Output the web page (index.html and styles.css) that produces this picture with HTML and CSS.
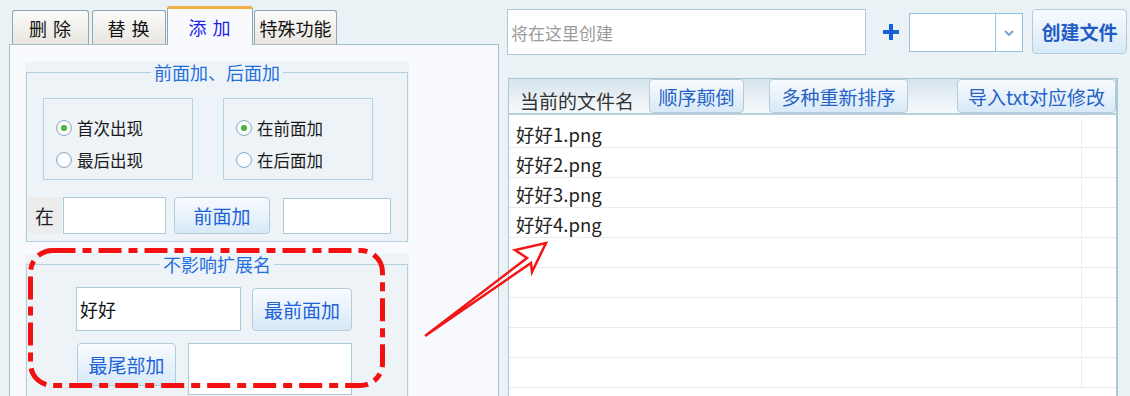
FILE: index.html
```html
<!DOCTYPE html>
<html lang="zh-CN">
<head>
<meta charset="utf-8">
<title>添加</title>
<link rel="stylesheet" href="styles.css">
</head>
<body>
<div class="app">
  <div class="left">
    <div class="tabs">
      <div class="tab t1">删 除</div>
      <div class="tab t2">替 换</div>
      <div class="tab t3">添 加</div>
      <div class="tab t4">特殊功能</div>
    </div>
    <div class="panel">
      <div class="group g1">
        <div class="frame">
          <div class="legend"><span>前面加、后面加</span></div>
          <div class="radios">
            <div class="rbox">
              <div class="radio on"><i></i>首次出现</div>
              <div class="radio"><i></i>最后出现</div>
            </div>
            <div class="rbox">
              <div class="radio on"><i></i>在前面加</div>
              <div class="radio"><i></i>在后面加</div>
            </div>
          </div>
          <div class="row1">
            <span class="lbl">在</span>
            <div class="input in-a"></div>
            <div class="btn btn-a">前面加</div>
            <div class="input in-b"></div>
          </div>
        </div>
      </div>
      <div class="group g2">
        <div class="frame">
          <div class="legend"><span>不影响扩展名</span></div>
          <div class="row2a">
            <div class="input in-c">好好</div>
            <div class="btn btn-c">最前面加</div>
          </div>
          <div class="row2b">
            <div class="btn btn-d">最尾部加</div>
            <div class="input in-d"></div>
          </div>
        </div>
      </div>
    </div>
  </div>
  <div class="right">
    <div class="top">
      <div class="name">将在这里创建</div>
      <svg class="plus" width="18" height="18" viewBox="0 0 18 18"><path d="M9 1V17M1 9H17" stroke="#1763d6" stroke-width="4"/></svg>
      <div class="combo"><div class="dd"><svg width="10" height="6" viewBox="0 0 10 6"><path d="M1 1L5 5L9 1" fill="none" stroke="#79a6cf" stroke-width="2"/></svg></div></div>
      <div class="btn create">创建文件</div>
    </div>
    <div class="list">
      <div class="lh">
        <div class="lh-label">当前的文件名</div>
        <div class="btn hb hb1">顺序颠倒</div>
        <div class="btn hb hb2">多种重新排序</div>
        <div class="btn hb hb3">导入txt对应修改</div>
      </div>
      <div class="rows">
        <div class="row"><div class="c1">好好1.png</div><div class="c2"></div></div>
        <div class="row"><div class="c1">好好2.png</div><div class="c2"></div></div>
        <div class="row"><div class="c1">好好3.png</div><div class="c2"></div></div>
        <div class="row"><div class="c1">好好4.png</div><div class="c2"></div></div>
        <div class="row"><div class="c1"></div><div class="c2"></div></div>
        <div class="row"><div class="c1"></div><div class="c2"></div></div>
        <div class="row"><div class="c1"></div><div class="c2"></div></div>
        <div class="row"><div class="c1"></div><div class="c2"></div></div>
        <div class="row"><div class="c1"></div><div class="c2"></div></div>
      </div>
    </div>
  </div>
</div>
<svg class="annot" width="1130" height="396" viewBox="0 0 1130 396">
  <rect x="30.5" y="250.5" width="352" height="135" rx="22" ry="22" fill="none" stroke="#f21010" stroke-width="5" stroke-dasharray="23 7 9 7"/>
  <polygon points="425,336 527,258 515,250 546,243 532,272 531,263" fill="none" stroke="#f41414" stroke-width="2.5" stroke-linejoin="miter"/>
</svg>
</body>
</html>
```
FILE: styles.css
```css
* { box-sizing: border-box; }
html, body { margin: 0; padding: 0; }
body {
  width: 1130px;
  height: 396px;
  overflow: hidden;
  position: relative;
  background: #eaf2f6;
  font-family: "Noto Sans CJK SC", "Noto Sans", sans-serif;
  color: #222;
}
.app { display: flex; height: 396px; padding-left: 9px; overflow: hidden; }
.left { width: 490px; height: 396px; flex: none; display: flex; flex-direction: column; }

/* tabs */
.tabs { height: 44px; display: flex; align-items: flex-end; padding-left: 3px; flex: none; }
.tab {
  height: 34px;
  border: 1px solid #8fa6b4;
  border-bottom: none;
  border-radius: 3px 3px 0 0;
  background: linear-gradient(#fbfbf9, #e8e6df);
  display: flex; align-items: center; justify-content: center;
  font-size: 18px; color: #111; flex: none; letter-spacing: 1px;
}
.t1 { width: 77px; }
.t2 { width: 74px; margin-left: 3px; }
.t3 {
  width: 86px; margin-left: 1px; height: 39px; margin-bottom: -1px;
  background: #f8fafd; border-top: 3px solid #f3b042; color: #2222e6;
  position: relative; z-index: 1; padding-bottom: 1px;
}
.t4 { width: 83px; margin-left: 1px; letter-spacing: 0; }

/* panel */
.panel {
  width: 490px; flex: 1; min-height: 0; overflow: hidden;
  border: 1px solid #a8bccb; border-bottom: none;
  background: #f8fafd;
  padding: 17px 0 0 15px;
}
.group { width: 384px; background: #edf3f7; padding: 10px 0 0 1px; }
.g1 { height: 180px; }
.g2 { height: 200px; margin-top: 12px; }
.frame { width: 382px; height: 100%; border: 1px solid #b0d0de; }
.legend { height: 20px; margin-top: -11px; display: flex; justify-content: center; line-height: 20px; }
.legend span { background: #edf3f7; padding: 0 3px; color: #1f6fdf; font-size: 18px; }

.radios { display: flex; gap: 30px; margin: 16px 0 0 16px; }
.rbox { width: 150px; height: 82px; border: 1px solid #b3d4e2; padding: 13px 0 0 12px; }
.radio { height: 32px; display: flex; align-items: center; gap: 5px; font-size: 16.5px; color: #1a1a1a; }
.radio i {
  width: 16px; height: 16px; border-radius: 50%; flex: none;
  border: 1px solid #8eabc4;
  background: radial-gradient(circle, #ffffff 40%, #e6edf3);
  display: flex; align-items: center; justify-content: center;
}
.radio.on i::after {
  content: ""; width: 6px; height: 6px; border-radius: 50%;
  background: radial-gradient(circle, #5ec24a, #2f9a22);
}

.row1 { display: flex; margin-top: 17px; height: 37px; }
.lbl { width: 35px; height: 36px; background: #ececec; font-size: 19px; display: flex; align-items: center; justify-content: center; }
.input { background: #fff; border: 1px solid #a9cbd8; }
.in-a { width: 103px; height: 37px; margin-left: 1px; }
.btn {
  border: 1px solid #b5cbd8; border-radius: 4px;
  background: linear-gradient(#f8fbfe, #d8e9f7);
  color: #1d62d8; font-size: 19px;
  display: flex; align-items: center; justify-content: center; flex: none;
}
.btn-a { width: 96px; height: 37px; margin-left: 8px; }
.in-b { width: 108px; height: 36px; margin: 1px 0 0 13px; }

.row2a { display: flex; margin: 13px 0 0 49px; align-items: flex-start; }
.in-c { width: 165px; height: 44px; font-size: 18px; padding-left: 3px; display: flex; align-items: center; color: #111; }
.btn-c { width: 100px; height: 43px; margin: 1px 0 0 11px; }
.row2b { display: flex; margin: 12px 0 0 50px; align-items: flex-start; }
.btn-d { width: 99px; height: 43px; }
.in-d { width: 164px; height: 52px; margin-left: 12px; }

/* right */
.right { margin-left: 8px; width: 623px; height: 396px; flex: none; padding-top: 9px; }
.top { display: flex; align-items: flex-start; }
.name {
  width: 359px; height: 46px; border: 1px solid #a6cad8; background: #fff;
  color: #9b9b9b; font-size: 17px; display: flex; align-items: center; padding-left: 3px;
}
.plus { margin: 14px 0 0 16px; flex: none; }
.combo {
  margin: 4px 0 0 9px; width: 114px; height: 39px;
  border: 1px solid #93c2e4; background: #fff;
  display: flex; justify-content: flex-end; flex: none;
}
.combo .dd { width: 27px; border-left: 1px solid #93c2e4; display: flex; align-items: center; justify-content: center; }
.create { margin-left: 9px; width: 95px; height: 45px; font-weight: bold; color: #1f5cc6; }

.list {
  margin: 23px 0 0 1px; width: 610px; height: 318px; overflow: hidden;
  border: 1px solid #a9c6d4; border-right: 2px solid #a9c9d8; border-bottom: none;
  background: #fff;
}
.lh {
  height: 36px; display: flex;
  border-bottom: 2px solid #b6d0dc;
  background: linear-gradient(#d6e4ec, #f7fafc);
}
.lh-label { width: 140px; padding: 8px 0 0 11px; font-size: 19px; color: #333; display: flex; align-items: center; flex: none; }
.hb { height: 34px; color: #2462c8; }
.hb1 { width: 95px; }
.hb2 { width: 139px; margin-left: 25px; }
.hb3 { width: 159px; margin-left: 49px; }

.rows { padding-top: 3px; }
.row { height: 30px; border-bottom: 1px solid #ebebeb; display: flex; }
.c1 {
  width: 573px; border-right: 1px solid #efefef;
  padding: 3px 0 0 7px; font-size: 18.5px; color: #222;
  display: flex; align-items: center;
}
.c2 { flex: 1; }

.annot { position: absolute; left: 0; top: 0; pointer-events: none; }
```
